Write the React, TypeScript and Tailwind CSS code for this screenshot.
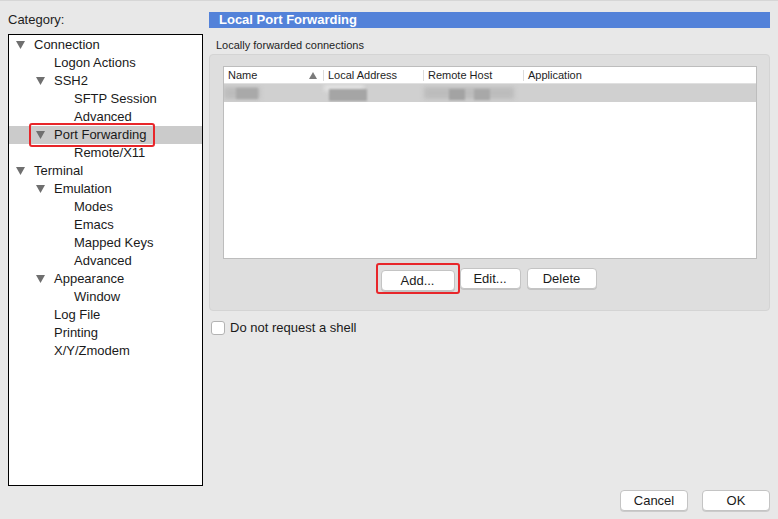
import React from 'react'

interface TreeItem {
  label: string
  level: number
  expanded?: boolean
  selected?: boolean
}

const tree: TreeItem[] = [
  { label: 'Connection', level: 0, expanded: true },
  { label: 'Logon Actions', level: 1 },
  { label: 'SSH2', level: 1, expanded: true },
  { label: 'SFTP Session', level: 2 },
  { label: 'Advanced', level: 2 },
  { label: 'Port Forwarding', level: 1, expanded: true, selected: true },
  { label: 'Remote/X11', level: 2 },
  { label: 'Terminal', level: 0, expanded: true },
  { label: 'Emulation', level: 1, expanded: true },
  { label: 'Modes', level: 2 },
  { label: 'Emacs', level: 2 },
  { label: 'Mapped Keys', level: 2 },
  { label: 'Advanced', level: 2 },
  { label: 'Appearance', level: 1, expanded: true },
  { label: 'Window', level: 2 },
  { label: 'Log File', level: 1 },
  { label: 'Printing', level: 1 },
  { label: 'X/Y/Zmodem', level: 1 },
]

function Triangle() {
  return (
    <svg width="9" height="8" viewBox="0 0 9 8" className="shrink-0">
      <path d="M0 0 H9 L4.5 8 Z" fill="#6f6f6f" />
    </svg>
  )
}

function Button({ children, w }: { children: React.ReactNode; w: string }) {
  return (
    <button
      className={`${w} h-[21px] rounded-[4px] bg-white border border-[#c4c4c4] shadow-[0_1px_0_rgba(0,0,0,0.12)] text-[13px] text-[#1a1a1a] leading-none`}
    >
      {children}
    </button>
  )
}

export default function App() {
  return (
    <div
      className="w-[778px] h-[519px] bg-[#e8e8e8] relative overflow-hidden border-t border-[#d6d6d6]"
      style={{ fontFamily: '"Liberation Sans", Arial, sans-serif' }}
    >
      <div className="flex h-full">
        {/* Left: category tree */}
        <div className="w-[209px] shrink-0 pl-[8px] pt-[11px] flex flex-col">
          <div className="text-[13px] text-[#1e1e1e] leading-[16px] mb-[6px]">Category:</div>
          <div className="w-[195px] h-[452px] bg-white border border-black pt-[1px]">
            {tree.map((item, i) => (
              <div
                key={i}
                className={`relative h-[18px] flex items-center text-[13px] text-[#1a1a1a] ${
                  item.selected ? 'bg-[#cbcbcb]' : ''
                }`}
              >
                <div className={`flex items-center ${item.level === 0 ? 'pl-[7px]' : item.level === 1 ? 'pl-[27px]' : 'pl-[47px]'}`}>
                  <span className="w-[18px] flex items-center">{item.expanded && <Triangle />}</span>
                  <span className="leading-[18px]">{item.label}</span>
                </div>
                {item.selected && (
                  <div className="absolute left-[20px] top-[-3px] w-[126px] h-[24px] border-2 border-[#e8262a] rounded-[3px]" />
                )}
              </div>
            ))}
          </div>
        </div>

        {/* Right: settings page */}
        <div className="flex-1 pt-[11px] pr-[8px] flex flex-col">
          <div className="h-[16px] bg-[#5382d9] text-white font-bold text-[13px] leading-[16px] pl-[10px]">
            Local Port Forwarding
          </div>
          <div className="text-[11px] text-[#1e1e1e] pl-[7px] mt-[10px] leading-[14px]">
            Locally forwarded connections
          </div>
          <div className="mt-[2px] h-[257px] bg-[#dedede] rounded-[4px] border border-[#d4d4d4] pt-[11px] pl-[13px] pr-[12px] flex flex-col">
            {/* Table */}
            <div className="h-[193px] bg-white border border-[#bdbdbd] flex flex-col">
              <div className="h-[17px] flex items-center text-[11px] text-[#1e1e1e] border-b border-[#e0e0e0]">
                <div className="w-[100px] pl-[4px] flex items-center justify-between pr-[6px] border-r border-[#dcdcdc] h-[11px]">
                  <span className="leading-[11px]">Name</span>
                  <svg width="8" height="7" viewBox="0 0 8 7">
                    <path d="M4 0 L8 7 H0 Z" fill="#7a7a7a" />
                  </svg>
                </div>
                <div className="w-[100px] pl-[4px] border-r border-[#dcdcdc] h-[11px] leading-[11px]">Local Address</div>
                <div className="w-[100px] pl-[4px] border-r border-[#dcdcdc] h-[11px] leading-[11px]">Remote Host</div>
                <div className="pl-[4px] leading-[11px]">Application</div>
              </div>
              {/* blurred selected row */}
              <div className="relative h-[18px] bg-[#d0d0d0] overflow-hidden">
                <div className="absolute left-[0px] top-[3px] w-[36px] h-[12px] bg-[#bcbcbc] blur-[2px]" />
                <div className="absolute left-[12px] top-[4px] w-[22px] h-[11px] bg-[#a9a9a9] blur-[1px]" />
                <div className="absolute left-[100px] top-[1px] w-[40px] h-[6px] bg-[#e4e4e4] blur-[2px]" />
                <div className="absolute left-[105px] top-[5px] w-[38px] h-[12px] bg-[#a5a5a5] blur-[1px]" />
                <div className="absolute left-[200px] top-[3px] w-[90px] h-[12px] bg-[#bcbcbc] blur-[2px]" />
                <div className="absolute left-[225px] top-[5px] w-[16px] h-[11px] bg-[#a3a3a3] blur-[1px]" />
                <div className="absolute left-[250px] top-[5px] w-[16px] h-[11px] bg-[#a8a8a8] blur-[1px]" />
              </div>
            </div>
            {/* Buttons */}
            <div className="flex justify-center mt-[9px] pr-[3px]">
              <div className="relative">
                <Button w="w-[74px]">Add...</Button>
                <div className="absolute left-[-5px] top-[-5px] w-[84px] h-[31px] border-2 border-[#e8262a] rounded-[3px]" />
              </div>
              <Button w="w-[61px] ml-[5px]">Edit...</Button>
              <Button w="w-[70px] ml-[6px]">Delete</Button>
            </div>
          </div>
          <label className="flex items-center mt-[9px] pl-[2px] gap-[5px]">
            <span className="w-[14px] h-[14px] bg-white border border-[#b3b3b3] rounded-[3px]" />
            <span className="text-[13px] text-[#1a1a1a] leading-[16px]">Do not request a shell</span>
          </label>
          <div className="flex-1" />
          <div className="flex justify-end gap-[14px] mb-[8px]">
            <Button w="w-[68px]">Cancel</Button>
            <Button w="w-[68px]">OK</Button>
          </div>
        </div>
      </div>
    </div>
  )
}
